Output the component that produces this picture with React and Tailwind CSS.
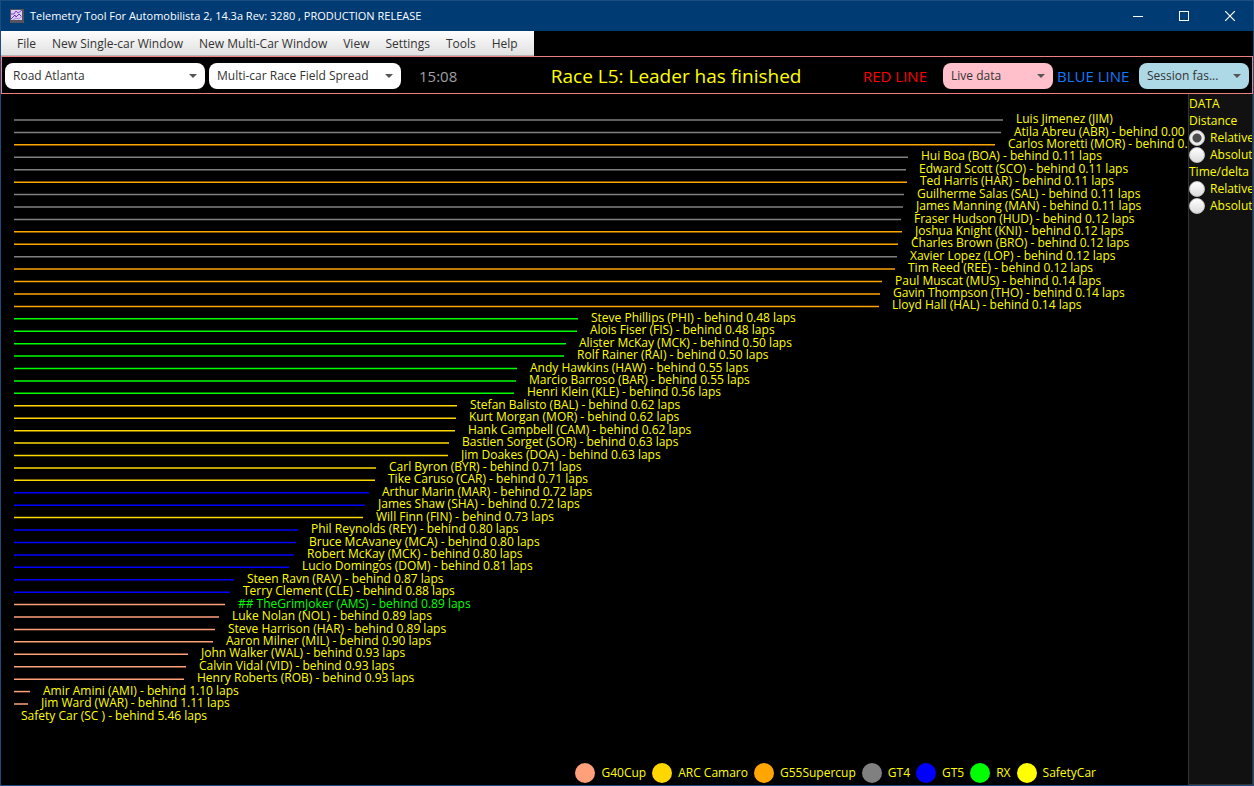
const COLORS = {
  G40Cup: "#ffa07a",
  "ARC Camaro": "#ffd700",
  G55Supercup: "#ffa500",
  GT4: "#808080",
  GT5: "#0000ff",
  RX: "#00ff00",
  SafetyCar: "#ffff00",
};

const LEGEND = ["G40Cup", "ARC Camaro", "G55Supercup", "GT4", "GT5", "RX", "SafetyCar"];

// [driver, gap in laps, car class, label position]
const FIELD = [
  ["Luis Jimenez (JIM)", null, "GT4", 1016],
  ["Atila Abreu (ABR)", "0.00", "GT4", 1014],
  ["Carlos Moretti (MOR)", "0.01", "G55Supercup", 1008],
  ["Hui Boa (BOA)", "0.11", "GT4", 921],
  ["Edward Scott (SCO)", "0.11", "GT4", 919],
  ["Ted Harris (HAR)", "0.11", "G55Supercup", 920],
  ["Guilherme Salas (SAL)", "0.11", "GT4", 917],
  ["James Manning (MAN)", "0.11", "GT4", 916],
  ["Fraser Hudson (HUD)", "0.12", "GT4", 914],
  ["Joshua Knight (KNI)", "0.12", "G55Supercup", 915],
  ["Charles Brown (BRO)", "0.12", "G55Supercup", 911],
  ["Xavier Lopez (LOP)", "0.12", "GT4", 910],
  ["Tim Reed (REE)", "0.12", "G55Supercup", 908],
  ["Paul Muscat (MUS)", "0.14", "G55Supercup", 895],
  ["Gavin Thompson (THO)", "0.14", "G55Supercup", 893],
  ["Lloyd Hall (HAL)", "0.14", "G55Supercup", 892],
  ["Steve Phillips (PHI)", "0.48", "RX", 591],
  ["Alois Fiser (FIS)", "0.48", "RX", 590],
  ["Alister McKay (MCK)", "0.50", "RX", 579],
  ["Rolf Rainer (RAI)", "0.50", "RX", 577],
  ["Andy Hawkins (HAW)", "0.55", "RX", 530],
  ["Marcio Barroso (BAR)", "0.55", "RX", 529],
  ["Henri Klein (KLE)", "0.56", "RX", 527],
  ["Stefan Balisto (BAL)", "0.62", "ARC Camaro", 470],
  ["Kurt Morgan (MOR)", "0.62", "ARC Camaro", 469],
  ["Hank Campbell (CAM)", "0.62", "ARC Camaro", 468],
  ["Bastien Sorget (SOR)", "0.63", "ARC Camaro", 462],
  ["Jim Doakes (DOA)", "0.63", "ARC Camaro", 461],
  ["Carl Byron (BYR)", "0.71", "ARC Camaro", 389],
  ["Tike Caruso (CAR)", "0.71", "ARC Camaro", 388],
  ["Arthur Marin (MAR)", "0.72", "GT5", 382],
  ["James Shaw (SHA)", "0.72", "GT5", 378],
  ["Will Finn (FIN)", "0.73", "ARC Camaro", 376],
  ["Phil Reynolds (REY)", "0.80", "GT5", 311],
  ["Bruce McAvaney (MCA)", "0.80", "GT5", 309],
  ["Robert McKay (MCK)", "0.80", "GT5", 307],
  ["Lucio Domingos (DOM)", "0.81", "GT5", 302],
  ["Steen Ravn (RAV)", "0.87", "GT5", 247],
  ["Terry Clement (CLE)", "0.88", "GT5", 243],
  ["## TheGrimJoker (AMS)", "0.89", "G40Cup", 238, true],
  ["Luke Nolan (NOL)", "0.89", "G40Cup", 232],
  ["Steve Harrison (HAR)", "0.89", "G40Cup", 228],
  ["Aaron Milner (MIL)", "0.90", "G40Cup", 226],
  ["John Walker (WAL)", "0.93", "G40Cup", 201],
  ["Calvin Vidal (VID)", "0.93", "G40Cup", 199],
  ["Henry Roberts (ROB)", "0.93", "G40Cup", 197],
  ["Amir Amini (AMI)", "1.10", "G40Cup", 43],
  ["Jim Ward (WAR)", "1.11", "G40Cup", 41],
  ["Safety Car (SC )", "5.46", "SafetyCar", 21],
];

const FIRST_ROW = 26;
const ROW_STEP = 584 / 47;
const LINE_START = 13;
const LABEL_GAP = 13;

function FieldSpread() {
  return (
    <svg className="block h-[640px] w-full" role="img" aria-label="Race field spread">
      {FIELD.map(([driver, gap, carClass, labelX, isPlayer], i) => {
        const x = labelX - 1;
        const y = FIRST_ROW + i * ROW_STEP;
        const end = x - LABEL_GAP;
        return (
          <g key={driver}>
            {end > LINE_START && (
              <line x1={LINE_START} x2={end} y1={y} y2={y} stroke={COLORS[carClass]} strokeWidth="1.5" />
            )}
            <text
              x={x}
              y={Math.round(y + 3.1)}
              className={isPlayer ? "fill-[#00ff00] text-[12px]" : "fill-[#ffff00] text-[12px]"}
            >
              {gap === null ? driver : `${driver} - behind ${gap} laps`}
            </text>
          </g>
        );
      })}
    </svg>
  );
}

function Combo({ label, value, className }) {
  return (
    <div className={`relative h-[26px] shrink-0 rounded-[8px] ${className}`}>
      <select
        aria-label={label}
        defaultValue={value}
        className="h-full w-full appearance-none rounded-[8px] bg-transparent pr-6 pl-2 text-[12px] text-[#333333]"
      >
        <option>{value}</option>
      </select>
      <svg className="pointer-events-none absolute top-[11px] right-2 h-1 w-2" viewBox="0 0 8 4" aria-hidden="true">
        <path d="M0 0H8L4 4Z" fill="#555555" />
      </svg>
    </div>
  );
}

function Choice({ name, label, checked }) {
  return (
    <label className="flex h-[17px] items-center gap-[5px]">
      <input
        type="radio"
        name={name}
        defaultChecked={checked}
        className="h-4 w-4 shrink-0 appearance-none rounded-full border border-[#c4c4c4] bg-linear-to-b from-white to-[#dcdcdc] bg-clip-border checked:bg-[radial-gradient(circle,#4d4d4d_0_4px,#ececec_5px)]"
      />
      {label}
    </label>
  );
}

function TitleBar() {
  return (
    <header className="flex h-[30px] shrink-0 items-center bg-[#013b74] pl-[9px] text-white">
      <svg className="mr-[6px] h-[14px] w-[14px] shrink-0" viewBox="0 0 14 14" aria-hidden="true">
        <rect width="14" height="14" fill="#55535c" />
        <rect x="1" y="1" width="11" height="10" fill="#dccdf5" />
        <path d="M1 5L4 5L6 2L8 4L12 1" fill="none" stroke="#7a45c4" />
        <path d="M1 10L5 6L6 8L9 5L11 7" fill="none" stroke="#6b35b8" />
        <path d="M3 11L6 9L9 10L12 7" fill="none" stroke="#a884e0" />
      </svg>
      <h1 className="grow text-[11px] whitespace-nowrap">
        Telemetry Tool For Automobilista 2, 14.3a Rev: 3280 , PRODUCTION RELEASE
      </h1>
      <button type="button" aria-label="Minimize" className="flex h-full w-[46px] items-center justify-center">
        <svg className="h-[10px] w-[10px]" viewBox="0 0 10 10" aria-hidden="true">
          <path d="M0 5.5H10" stroke="white" />
        </svg>
      </button>
      <button type="button" aria-label="Maximize" className="flex h-full w-[46px] items-center justify-center">
        <svg className="h-[10px] w-[10px]" viewBox="0 0 10 10" aria-hidden="true">
          <rect x="0.5" y="0.5" width="9" height="9" fill="none" stroke="white" />
        </svg>
      </button>
      <button type="button" aria-label="Close" className="flex h-full w-[46px] items-center justify-center">
        <svg className="h-[10px] w-[10px]" viewBox="0 0 10 10" aria-hidden="true">
          <path d="M0 0L10 10M10 0L0 10" stroke="white" strokeWidth="1.2" />
        </svg>
      </button>
    </header>
  );
}

const MENU = ["File", "New Single-car Window", "New Multi-Car Window", "View", "Settings", "Tools", "Help"];

export default function App() {
  return (
    <div className="flex min-h-screen flex-col overflow-hidden border border-[#1c4b7e] bg-black font-['Open_Sans',sans-serif] text-[12px] text-[#ffff00]">
      <TitleBar />
      <nav className="flex h-[25px] shrink-0 items-center gap-4 self-start border-b border-[#b5b5b5] bg-linear-to-b from-[#fdfdfd] to-[#e1e1e1] px-4 pt-[2px] text-[12px] text-[#333333]">
        {MENU.map((item) => (
          <button key={item} type="button" className="whitespace-nowrap">
            {item}
          </button>
        ))}
      </nav>
      <section className="flex h-[38px] shrink-0 items-center border border-[#f08080] px-[3px] pt-[2px]">
        <Combo label="Track" value="Road Atlanta" className="w-[200px] bg-white" />
        <Combo label="View" value="Multi-car Race Field Spread" className="ml-1 w-[192px] bg-white" />
        <time className="ml-[18px] text-[15px] text-[#a0a0a0]">15:08</time>
        <p className="grow pl-8 text-center text-[19px] leading-6 whitespace-nowrap">Race L5: Leader has finished</p>
        <span className="mr-4 text-[15px] whitespace-nowrap text-[#ff0000]">RED LINE</span>
        <Combo label="Red line" value="Live data" className="w-[110px] bg-[#ffc0cb]" />
        <span className="mx-1 w-[78px] text-[15px] whitespace-nowrap text-[#1478ff]">BLUE LINE</span>
        <Combo label="Blue line" value="Session fas..." className="w-[110px] bg-[#add8e6]" />
      </section>
      <div className="flex grow">
        <main className="flex min-w-0 grow flex-col justify-between overflow-hidden">
          <FieldSpread />
          <ul className="flex items-center justify-end gap-[6px] pr-[92px] pb-[2px]">
            {LEGEND.map((name) => (
              <li key={name} className="flex items-center gap-[6px] whitespace-nowrap">
                <svg className="h-5 w-5" viewBox="0 0 20 20" aria-hidden="true">
                  <circle cx="10" cy="10" r="10" fill={COLORS[name]} />
                </svg>
                {name}
              </li>
            ))}
          </ul>
        </main>
        <aside className="w-[65px] shrink-0 overflow-hidden border border-t-0 border-[#333333] bg-[#111111] pt-[1px] leading-[17px]">
          <h2>DATA</h2>
          <fieldset>
            <legend>Distance</legend>
            <Choice name="distance" label="Relative" checked />
            <Choice name="distance" label="Absolut" />
          </fieldset>
          <fieldset>
            <legend>Time/delta</legend>
            <Choice name="time" label="Relative" />
            <Choice name="time" label="Absolut" />
          </fieldset>
        </aside>
      </div>
    </div>
  );
}
